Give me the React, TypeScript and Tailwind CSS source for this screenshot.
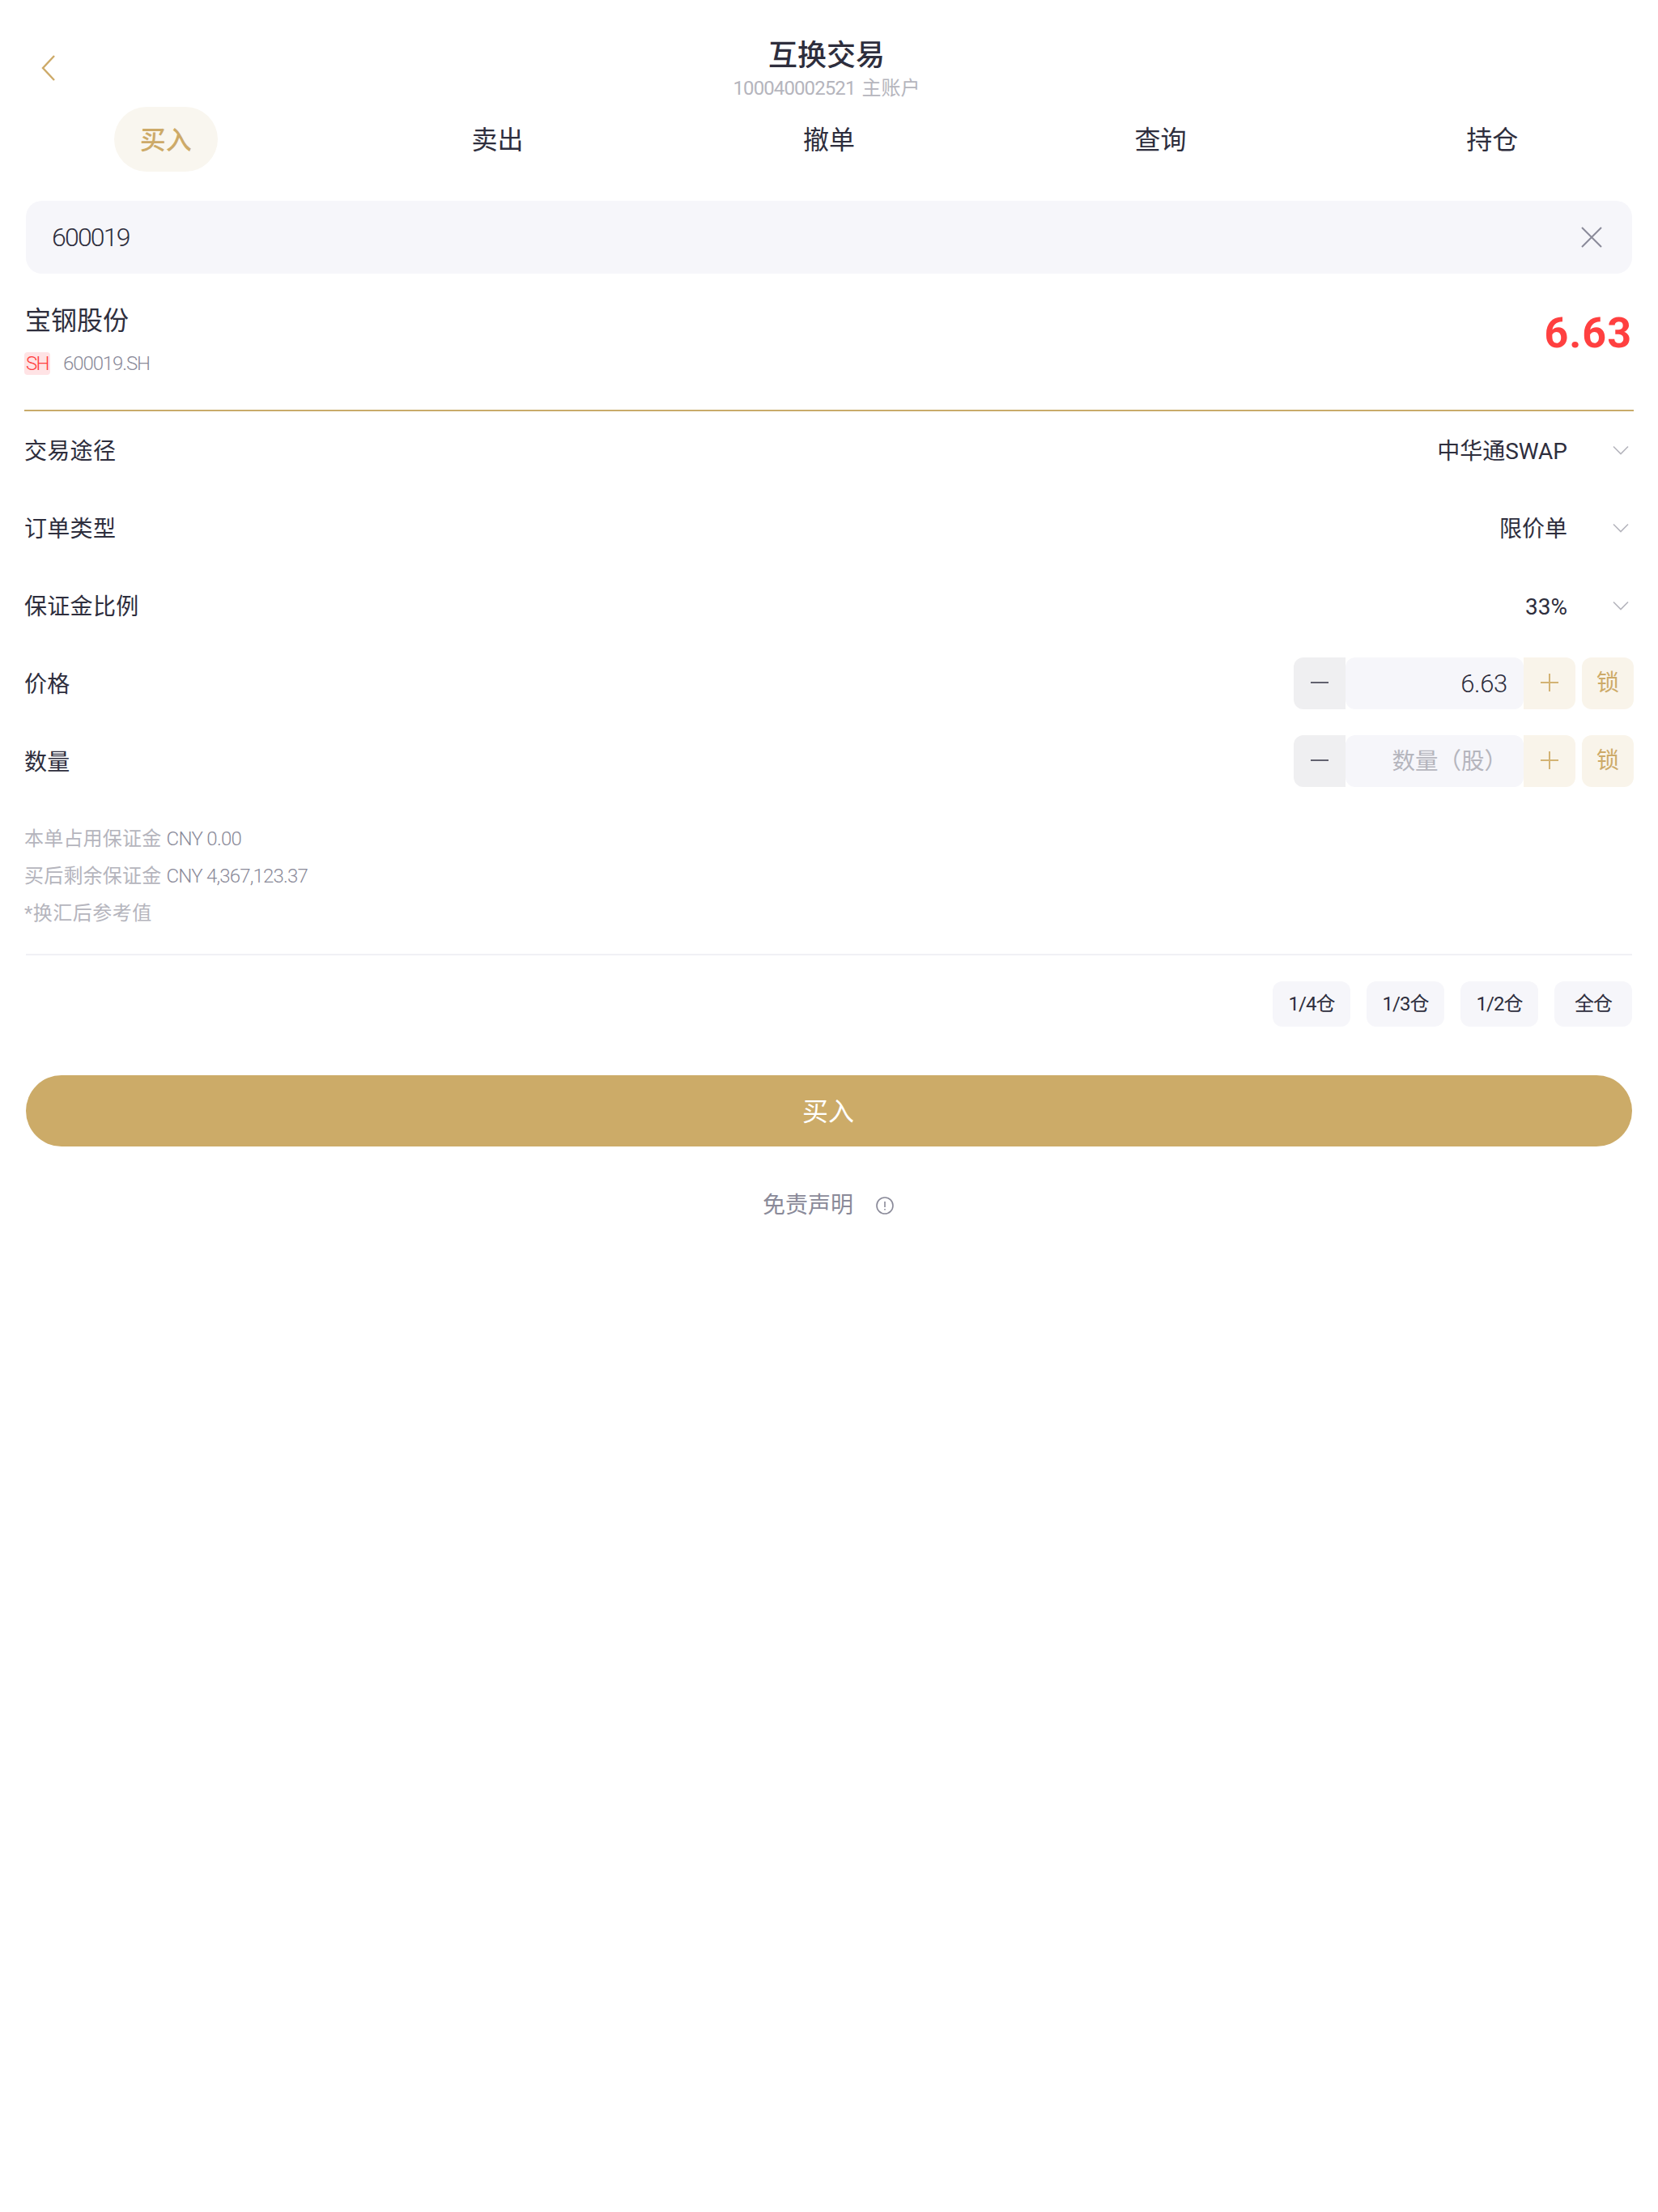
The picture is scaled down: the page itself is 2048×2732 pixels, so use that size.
import React from 'react';

const font = "font-['Roboto','Noto_Sans_CJK_SC',sans-serif]";

const tabs = ['买入', '卖出', '撤单', '查询', '持仓'];
const selects = [
  { label: '交易途径', value: '中华通SWAP' },
  { label: '订单类型', value: '限价单' },
  { label: '保证金比例', value: '33%' },
];
const quick = ['1/4仓', '1/3仓', '1/2仓', '全仓'];

function Chevron() {
  return (
    <svg width="20" height="12" viewBox="0 0 20 12" fill="none" className="ml-[56px] mr-[6px]">
      <path d="M1 1.5L10 10.5L19 1.5" stroke="#b5b5bd" strokeWidth="1.6" />
    </svg>
  );
}

function Stepper({ value, placeholder }: { value?: string; placeholder?: string }) {
  return (
    <div className="flex items-center">
      <div className="w-16 h-16 bg-[#efeff1] rounded-l-xl flex items-center justify-center pb-[2px]">
        <svg width="22" height="4" viewBox="0 0 22 4"><path d="M0 2H22" stroke="#62626f" strokeWidth="2" /></svg>
      </div>
      <div className="w-[220px] h-16 bg-[#f6f6fa] rounded-xl flex items-center justify-end pr-5">
        {value ? (
          <span className="text-[31px] text-[#2e2e3d] font-light tracking-[-0.3px] pt-[3px]">{value}</span>
        ) : (
          <span className="text-[28.5px] text-[#b5b5bd] pt-[3px]">{placeholder}</span>
        )}
      </div>
      <div className="w-16 h-16 bg-[#f9f4ea] rounded-r-xl flex items-center justify-center pb-[2px]">
        <svg width="22" height="22" viewBox="0 0 22 22"><path d="M0 11H22M11 0V22" stroke="#d3b374" strokeWidth="2" /></svg>
      </div>
      <div className="w-16 h-16 ml-2 bg-[#f9f4ea] rounded-xl flex items-center justify-center text-[28px] text-[#cdaa68]">锁</div>
    </div>
  );
}

export default function App() {
  return (
    <div className={`w-[2048px] h-[2732px] bg-white text-[#2e2e3d] ${font}`}>
      <div className="h-[132px] grid grid-cols-[1fr_auto_1fr] pt-[47px]">
        <div className="pl-[51px] pt-[21px]">
          <svg width="17" height="32" viewBox="0 0 17 32" fill="none">
            <path d="M16 1L2 16L16 31" stroke="#cdaa68" strokeWidth="2.4" />
          </svg>
        </div>
        <div className="flex flex-col items-center -translate-x-[3px]">
          <div className="text-[36px] leading-[44px] font-medium">互换交易</div>
          <div className="text-[24px] leading-[32px] mt-[2px] text-[#b5b5bd]">
            <span className="tracking-[-0.9px]">100040002521</span>
            <span className="ml-2">主账户</span>
          </div>
        </div>
        <div />
      </div>

      <div className="grid grid-cols-5 h-20">
        {tabs.map((t, i) => (
          <div key={t} className="flex items-center justify-center">
            {i === 0 ? (
              <div className="w-32 h-20 rounded-full bg-[#f9f6ef] flex items-center justify-center text-[32px] font-medium text-[#cdaa68] pt-[2px]">{t}</div>
            ) : (
              <span className="text-[32px] pt-[2px]">{t}</span>
            )}
          </div>
        ))}
      </div>

      <div className="mt-9 mx-8 h-[90px] bg-[#f6f6fa] rounded-[20px] flex items-center justify-between pl-8 pr-[37px]">
        <span className="text-[32px] font-light tracking-[-1.8px]">600019</span>
        <svg width="26" height="26" viewBox="0 0 26 26" fill="none">
          <path d="M1 1L25 25M25 1L1 25" stroke="#8a8a99" strokeWidth="2" />
        </svg>
      </div>

      <div className="mx-8 h-[168px] flex justify-between">
        <div>
          <div className="mt-[36px] -ml-px text-[32px] leading-[44px]">宝钢股份</div>
          <div className="mt-[13px] flex items-center -ml-0.5">
            <span className="w-8 h-7 rounded bg-[#ffe3e5] text-[#ff4040] text-[24px] font-light tracking-[-1.5px] flex items-center justify-center">SH</span>
            <span className="ml-4 text-[24px] text-[#8a8a99] font-light tracking-[-1.1px]">600019.SH</span>
          </div>
        </div>
        <div className="mt-[44px] text-[52px] leading-[60px] font-bold text-[#ff4040] tracking-[1px]">6.63</div>
      </div>

      <div className="mx-[30px] h-[2px] bg-[#c9ab6a]" />

      <div className="mx-[30px] text-[28px]">
        {selects.map(s => (
          <div key={s.label} className="h-24 flex items-center justify-between">
            <span className="pt-[3px] tracking-[0.3px]">{s.label}</span>
            <span className="flex items-center">
              <span className="pt-[3px]">{s.value}</span>
              <Chevron />
            </span>
          </div>
        ))}
        <div className="h-24 flex items-center justify-between">
          <span className="pt-[3px] tracking-[0.3px]">价格</span>
          <Stepper value="6.63" />
        </div>
        <div className="h-24 flex items-center justify-between">
          <span className="pt-[3px] tracking-[0.3px]">数量</span>
          <Stepper placeholder="数量（股）" />
        </div>
      </div>

      <div className="mt-[25px] mx-[30px] text-[24px] leading-[46px] text-[#b5b5bd]">
        <div className="tracking-[0.2px]">本单占用保证金 <span className="text-[#8a8a99] font-light tracking-[-0.7px]">CNY 0.00</span></div>
        <div className="tracking-[0.2px]">买后剩余保证金 <span className="text-[#8a8a99] font-light tracking-[-0.8px]">CNY 4,367,123.37</span></div>
        <div className="tracking-[0.5px]">*换汇后参考值</div>
      </div>

      <div className="mt-[27px] mx-8 h-[2px] bg-[#f0f0f5]" />

      <div className="mt-8 mx-8 flex justify-end gap-5">
        {quick.map(q => (
          <div key={q} className="w-24 h-14 rounded-xl bg-[#f6f6fa] flex items-center justify-center text-[24px] tracking-[-1px]">{q}</div>
        ))}
      </div>

      <div className="mt-[60px] mx-8 h-[88px] rounded-full bg-[#ccab68] flex items-center justify-center text-[32px] text-white pt-[2px] pr-[2px]">买入</div>

      <div className="mt-[53px] flex items-center justify-center text-[28px] leading-10 text-[#8a8a99] pr-[2px]">
        <span>免责声明</span>
        <svg width="22" height="22" viewBox="0 0 22 22" fill="none" className="ml-7">
          <circle cx="11" cy="11" r="10" stroke="#8a8a99" strokeWidth="1.6" />
          <path d="M11 6V13M11 15V16.5" stroke="#8a8a99" strokeWidth="1.6" />
        </svg>
      </div>
    </div>
  );
}
